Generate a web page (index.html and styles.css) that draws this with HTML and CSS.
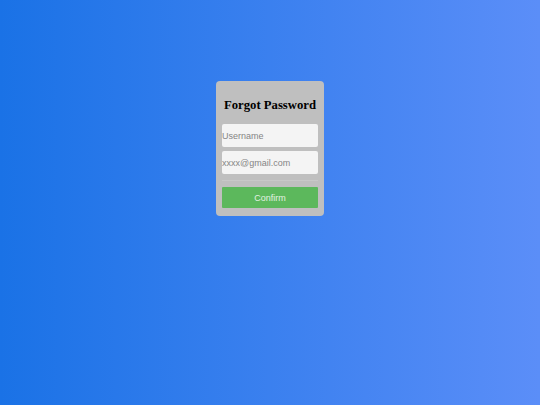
FILE: index.html
```html
<!DOCTYPE html>
<html>
<head>
<meta charset="utf-8">
<link rel="stylesheet" href="styles.css">
</head>
<body>
<div class="page">
  <form class="card">
    <h2 class="title">Forgot Password</h2>
    <input class="field" type="text" placeholder="Username">
    <input class="field second" type="text" placeholder="xxxx@gmail.com">
    <div class="rule"></div>
    <button class="btn" type="button">Confirm</button>
  </form>
</div>
</body>
</html>
```
FILE: styles.css
```css
html, body {
  margin: 0;
  padding: 0;
  height: 100%;
}
body {
  background: linear-gradient(to right, #1a72e6, #5b8ef8);
  font-family: "Liberation Sans", Arial, sans-serif;
}
.page {
  display: flex;
  justify-content: center;
  padding-top: 81px;
}
.card {
  width: 108px;
  box-sizing: border-box;
  background: #bfbfbf;
  border-radius: 4px;
  padding: 0 6px 8px;
  display: flex;
  flex-direction: column;
}
.title {
  margin: 17px 0 0;
  height: 26px;
  font-family: "Liberation Serif", "Times New Roman", serif;
  font-size: 12.7px;
  font-weight: bold;
  text-align: center;
  color: #000;
  white-space: nowrap;
}
.field {
  height: 23px;
  box-sizing: border-box;
  border: none;
  border-radius: 2px;
  background: #f4f4f4;
  padding: 0;
  font-family: "Liberation Sans", Arial, sans-serif;
  font-size: 9px;
  color: #333;
  outline: none;
}
.field::placeholder {
  color: #858585;
}
.second {
  margin-top: 4px;
}
.rule {
  height: 1px;
  background: #c8c8c8;
  margin: 6px 0 6px;
}
.btn {
  height: 21px;
  border: none;
  border-radius: 1px;
  background: #5cb85c;
  color: #e2f1e2;
  font-family: "Liberation Sans", Arial, sans-serif;
  font-size: 9px;
  padding: 0;
}
```
